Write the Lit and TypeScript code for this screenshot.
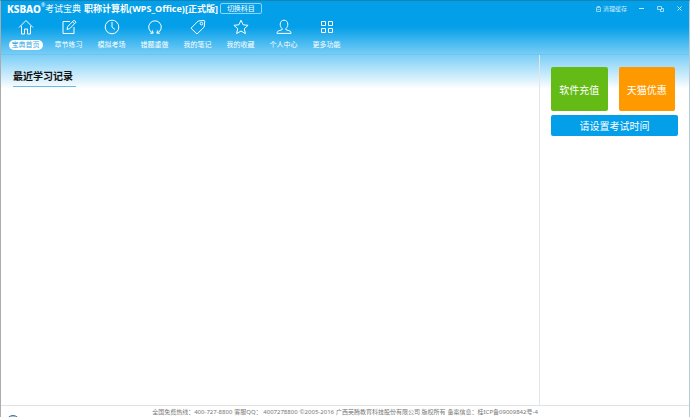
import { LitElement, html, css, svg } from "lit";
import { customElement } from "lit/decorators.js";
import { classMap } from "lit/directives/class-map.js";

const navItems = [
  { label: "宝典首页", icon: svg`<path d="M1 8.5 8 1.5l7 7M3.5 7v8h3v-5h3v5h3V7"/>` },
  { label: "章节练习", icon: svg`<path d="M9 2.5H2v12h11V8M6 10.5l.7-3L13 1.2l2 2L8.8 9.6zM11.5 2.7l2 2"/>` },
  { label: "模拟考场", icon: svg`<circle cx="8" cy="8" r="6.8"/><path d="M8 3v5.2l3 2.3"/>` },
  { label: "错题重做", icon: svg`<path d="M5.8 14A6.3 6.3 0 1 1 10.2 14M3.2 14.3l3-.2-.9-2.7M12.8 14.3l-3-.2.9-2.7"/>` },
  { label: "我的笔记", icon: svg`<path d="M1 9.2 8.2 2l6-.6.6.6-.6 6L7 15z"/><circle cx="11.5" cy="4.6" r="1.3"/>` },
  { label: "我的收藏", icon: svg`<path d="m8 1.2 2.1 4.6 5 .5-3.8 3.3 1.1 5L8 12l-4.4 2.6 1.1-5L.9 6.3l5-.5z"/>` },
  { label: "个人中心", icon: svg`<path d="M6.2 9.6C4.8 8.4 4.2 7 4.2 5.2c0-2.4 1.6-4 3.8-4s3.8 1.6 3.8 4c0 1.8-.6 3.2-2 4.4v1l4 1.4c.8.3 1.2.9 1.2 2.4H1c0-1.500.4-2.1 1.2-2.4l4-1.400z"/>` },
  { label: "更多功能", icon: svg`<path d="M2.500 2.500h4v4h-4zM9.500 2.500h4v4h-4zM2.500 9.500h4v4h-4zM9.500 9.500h4v4h-4z"/>` },
];

@customElement("app-root")
export class AppRoot extends LitElement {
  static styles = css`
    :host {
      box-sizing: border-box;
      display: flex;
      flex-direction: column;
      min-height: 100vh;
      position: relative;
      overflow: hidden;
      border-top: 1px solid #1683b4;
      border-left: 1px solid #a9adb0;
      border-right: 1px solid #b5cbd8;
      background: linear-gradient(#049fe9 0, #049fe9 26px, #7bcef6 54px, #fff 88px);
      font-family: "Noto Sans", "Noto Sans CJK SC", sans-serif;
      color: #fff;
    }
    * { box-sizing: border-box; }
    button { font: inherit; color: inherit; border: 0; padding: 0; background: none; cursor: pointer; }
    svg { display: block; fill: none; stroke: currentColor; }
    header { border-bottom: 1px solid #6fc4ee; }
    .titlebar { display: flex; align-items: center; height: 15px; padding: 0 5px 0 6px; }
    .logo { font-size: 10px; line-height: 14px; font-weight: 800; }
    .reg { align-self: flex-start; font-size: 5px; line-height: 8px; }
    .brand { font-size: 9px; line-height: 14px; }
    .subject { margin: 0 2px 0 3px; font-size: 9px; line-height: 14px; font-weight: bold; white-space: nowrap; }
    .switch { width: 42px; height: 11px; border: 1px solid #8fd5f8; border-radius: 2px; font-size: 7px; line-height: 9px; }
    .tools { display: flex; align-items: center; gap: 10px; margin-left: auto; }
    .clear { display: flex; align-items: center; gap: 2px; font-size: 6px; line-height: 10px; color: #c9ecfc; }
    .win { width: 9px; height: 9px; display: grid; place-items: center; color: #c9ecfc; }
    nav { display: flex; padding: 3px 3px 4px; }
    .item { width: 43px; display: flex; flex-direction: column; align-items: center; gap: 5px; color: #fff; text-decoration: none; }
    .label { width: 34px; border-radius: 5px; font-size: 7px; line-height: 10px; text-align: center; white-space: nowrap; }
    .active .label { background: #fff; color: #39a9df; }
    main { flex: 1; display: flex; }
    .records { flex: 1; padding: 12px; }
    h1 { width: 63px; margin: 0; border-bottom: 1px solid #6bb9df; font-size: 10px; line-height: 19px; font-weight: bold; color: #111; white-space: nowrap; }
    aside { width: 150px; border-left: 1px solid #e2e6e8; padding: 12px 11px; }
    .actions { display: grid; grid-template-columns: 1fr 1fr; gap: 11px; padding-right: 3px; margin-bottom: 4px; }
    .action { height: 44px; border-radius: 2px; font-size: 10px; }
    .green { background: #64bb15; }
    .orange { background: #ff9900; }
    .exam { display: block; width: 100%; height: 21px; border-radius: 2px; background: #049fe9; font-size: 10px; line-height: 20px; }
    footer { display: flex; justify-content: center; gap: 2px; height: 12px; border-top: 1px solid #e2e2e2; font-size: 6px; line-height: 12px; color: #777; white-space: nowrap; }
    .orb { position: absolute; left: 5px; bottom: -12px; width: 14px; height: 14px; border: 1px solid #356f9e; border-radius: 50%; background: #aacce4; }
  `;

  render() {
    return html`
      <header>
        <div class="titlebar">
          <span class="logo">KSBAO</span><span class="reg">®</span>
          <span class="brand">考试宝典</span>
          <span class="subject">职称计算机(WPS_Office)[正式版]</span>
          <button class="switch">切换科目</button>
          <div class="tools">
            <button class="clear">
              <svg width="5" height="6" viewBox="0 0 5 6"><path d="M.5 1.500h4v4h-4zM1 .5h3M1.500 3.500h2" stroke-width=".7"/></svg>清理缓存
            </button>
            <button class="win" aria-label="最小化"><svg width="5" height="5"><path d="M0 2.500h5"/></svg></button>
            <button class="win" aria-label="还原"><svg width="7" height="6"><path d="M.5.5h4v3h-4zM4.500 2.500h2v3h-3v-2" stroke-width=".8"/></svg></button>
            <button class="win" aria-label="关闭"><svg width="5" height="5"><path d="m.5.5 4 4m0-4-4 4"/></svg></button>
          </div>
        </div>
        <nav>
          ${navItems.map((item, i) => html`
            <a href="#" class=${classMap({ item: true, active: i === 0 })}>
              <svg width="16" height="16" viewBox="0 0 16 16">${item.icon}</svg>
              <span class="label">${item.label}</span>
            </a>`)}
        </nav>
      </header>
      <main>
        <section class="records"><h1>最近学习记录</h1></section>
        <aside>
          <div class="actions">
            <button class="action green">软件充值</button>
            <button class="action orange">天猫优惠</button>
          </div>
          <button class="exam">请设置考试时间</button>
        </aside>
      </main>
      <footer>
        <span>全国免费热线：400-727-8800</span>
        <span>客服QQ： 4007278800</span>
        <span>©2005-2016</span>
        <span>广西英腾教育科技股份有限公司 版权所有</span>
        <span>备案信息：桂ICP备09009842号-4</span>
      </footer>
      <span class="orb"></span>
    `;
  }
}
